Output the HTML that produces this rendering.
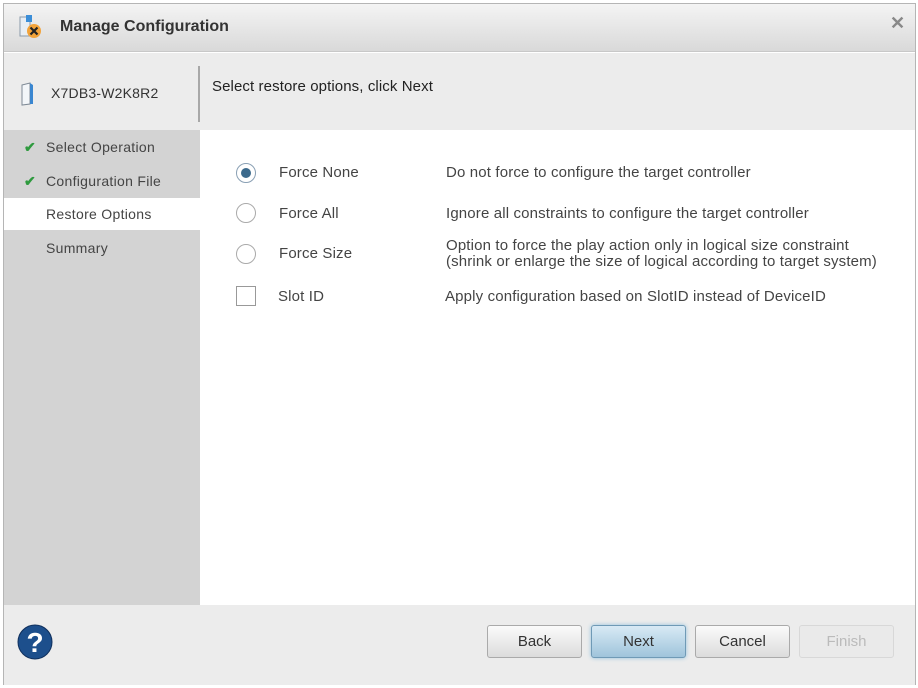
<!DOCTYPE html>
<html><head><style>
*{margin:0;padding:0;box-sizing:border-box}
body{width:918px;height:688px;background:#fff;font-family:"Liberation Sans",Arial,sans-serif;position:relative;overflow:hidden}
.a{position:absolute}
.win{left:3px;top:3px;width:913px;height:682px;border:1px solid #b5b5b5;background:#fff}
.title{left:4px;top:4px;width:911px;height:48px;background:linear-gradient(#f4f4f4,#d9d9d9);border-bottom:1px solid #c8c8c8}
.ttxt{left:60px;top:18px;font-size:16px;font-weight:bold;color:#333}
.hdr{left:4px;top:53px;width:911px;height:77px;background:#ececec}
.side{left:4px;top:130px;width:196px;height:475px;background:#d3d3d3}
.foot{left:4px;top:605px;width:911px;height:80px;background:#ececec}
.si{left:4px;width:196px;height:32px;font-size:14px;letter-spacing:0.3px;color:#444;padding-left:42px;line-height:32px}
.ck{position:absolute;left:20px;top:0;color:#2e9a3e;font-size:14px;font-weight:bold}
.rad{width:20px;height:20px;border:1px solid #aaa;border-radius:50%;background:#fff}
.lbl{font-size:15px;letter-spacing:0.15px;color:#444}
.btn{top:625px;width:95px;height:33px;border:1px solid #aaa;border-radius:3px;background:linear-gradient(#fbfbfb,#dcdcdc);font-size:15px;color:#333;text-align:center;line-height:31px}
</style></head><body>
<div class="a win"></div>
<div class="a title"></div>
<svg class="a" style="left:18px;top:14px" width="26" height="26"><rect x="2" y="3" width="10" height="19" fill="#e8eef4" stroke="#8a9aaa"/><rect x="8" y="1" width="6" height="7" fill="#3b8ed8"/><circle cx="16" cy="17" r="7" fill="#f2a33a"/><path d="M12.5 13.5l7 7M19.5 13.5l-7 7" stroke="#222" stroke-width="2.2"/></svg>
<div class="a ttxt">Manage Configuration</div>
<div class="a" style="left:890px;top:13px;font-size:18px;color:#888;font-weight:bold">✕</div>
<div class="a hdr"></div>
<div class="a" style="left:198px;top:66px;width:2px;height:56px;background:#a8a8a8"></div>
<svg class="a" style="left:20px;top:82px" width="14" height="24"><path d="M2 3l8-2v21l-8 1z" fill="#f3f6f9" stroke="#7f8a96"/><path d="M10 1l3 2v19l-3 0z" fill="#3a86d0"/></svg>
<div class="a" style="left:51px;top:85px;font-size:14px;letter-spacing:0.2px;color:#333">X7DB3-W2K8R2</div>
<div class="a" style="left:212px;top:78px;font-size:15px;letter-spacing:0.1px;color:#222">Select restore options, click Next</div>
<div class="a side"></div>
<div class="a si" style="top:131px"><span class="ck">✔</span>Select Operation</div>
<div class="a si" style="top:165px"><span class="ck">✔</span>Configuration File</div>
<div class="a si" style="top:198px;background:#fff">Restore Options</div>
<div class="a si" style="top:232px">Summary</div>

<div class="a rad" style="left:236px;top:163px;border-color:#8aa0b4"><div style="position:absolute;left:4px;top:4px;width:10px;height:10px;border-radius:50%;background:#3c6a8c"></div></div>
<div class="a lbl" style="left:279px;top:164px">Force None</div>
<div class="a lbl" style="left:446px;top:164px">Do not force to configure the target controller</div>
<div class="a rad" style="left:236px;top:203px"></div>
<div class="a lbl" style="left:279px;top:205px">Force All</div>
<div class="a lbl" style="left:446px;top:205px">Ignore all constraints to configure the target controller</div>
<div class="a rad" style="left:236px;top:244px"></div>
<div class="a lbl" style="left:279px;top:245px">Force Size</div>
<div class="a lbl" style="left:446px;top:238px;line-height:16px">Option to force the play action only in logical size constraint<br>(shrink or enlarge the size of logical according to target system)</div>
<div class="a" style="left:236px;top:286px;width:20px;height:20px;border:1px solid #999;background:#fff"></div>
<div class="a lbl" style="left:278px;top:288px">Slot ID</div>
<div class="a lbl" style="left:445px;top:288px">Apply configuration based on SlotID instead of DeviceID</div>

<div class="a foot"></div>
<svg class="a" style="left:16px;top:624px" width="38" height="36"><ellipse cx="19" cy="18" rx="17" ry="17" fill="#1d4f8c" stroke="#0f2f5c"/><text x="19" y="28" font-family="Liberation Sans" font-size="28" font-weight="bold" fill="#fff" text-anchor="middle">?</text></svg>
<div class="a btn" style="left:487px">Back</div>
<div class="a btn" style="left:591px;background:linear-gradient(#d8eaf5,#9fc4db);border-color:#6f9ab6;box-shadow:0 0 4px #8fc0de">Next</div>
<div class="a btn" style="left:695px">Cancel</div>
<div class="a btn" style="left:799px;color:#bbb;border-color:#d8d8d8;background:#eaeaea">Finish</div>
</body></html>
